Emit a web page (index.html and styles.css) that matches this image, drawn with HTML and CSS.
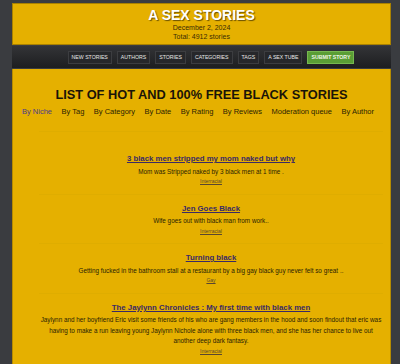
FILE: index.html
```html
<!DOCTYPE html>
<html>
<head>
<meta charset="utf-8">
<link rel="stylesheet" href="styles.css">
</head>
<body>
<div class="wrap">
  <header class="header">
    <div class="site-title">A SEX STORIES</div>
    <div class="meta">December 2, 2024</div>
    <div class="meta">Total: 4912 stories</div>
  </header>
  <nav class="nav">
    <a class="btn">NEW STORIES</a>
    <a class="btn">AUTHORS</a>
    <a class="btn">STORIES</a>
    <a class="btn">CATEGORIES</a>
    <a class="btn">TAGS</a>
    <a class="btn">A SEX TUBE</a>
    <a class="btn submit">SUBMIT STORY</a>
  </nav>
  <main class="main">
    <h1 class="list-title">LIST OF HOT AND 100% FREE BLACK STORIES</h1>
    <div class="tabs">
      <a class="tab active">By Niche</a>
      <a class="tab">By Tag</a>
      <a class="tab">By Category</a>
      <a class="tab">By Date</a>
      <a class="tab">By Rating</a>
      <a class="tab">By Reviews</a>
      <a class="tab">Moderation queue</a>
      <a class="tab">By Author</a>
    </div>
    <div class="stories">
      <div class="story">
        <a class="story-title">3 black men stripped my mom naked but why</a>
        <div class="desc">Mom was Stripped naked by 3 black men at 1 time .</div>
        <a class="cat">Interracial</a>
      </div>
      <div class="story">
        <a class="story-title">Jen Goes Black</a>
        <div class="desc">Wife goes out with black man from work..</div>
        <a class="cat">Interracial</a>
      </div>
      <div class="story">
        <a class="story-title">Turning black</a>
        <div class="desc">Getting fucked in the bathroom stall at a restaurant by a big gay black guy never felt so great ..</div>
        <a class="cat">Gay</a>
      </div>
      <div class="story">
        <a class="story-title">The Jaylynn Chronicles : My first time with black men</a>
        <div class="desc">Jaylynn and her boyfriend Eric visit some friends of his who are gang members in the hood and soon findout that eric was having to make a run leaving young Jaylynn Nichole alone with three black men, and she has her chance to live out another deep dark fantasy.</div>
        <a class="cat">Interracial</a>
      </div>
    </div>
  </main>
</div>
</body>
</html>
```
FILE: styles.css
```css
html, body {
  margin: 0;
  padding: 0;
}
body {
  background: #3a3c40;
  font-family: "Liberation Sans", Arial, sans-serif;
  color: #2a1e05;
}
.wrap {
  margin: 3px 9px 0 12px;
}
.header {
  background: #e5b000;
  border: 1px solid #a98100;
  text-align: center;
  height: 42px;
  box-sizing: border-box;
  padding-top: 3px;
}
.site-title {
  color: #fff;
  font-weight: bold;
  font-size: 14px;
  line-height: 16px;
  text-shadow: 1px 1px 1px #6a5000;
}
.meta {
  font-size: 7px;
  line-height: 9px;
  color: #3a2c05;
}
.nav {
  margin-top: 1px;
  height: 22px;
  background: linear-gradient(#333437, #1d1e20);
  display: flex;
  justify-content: center;
  align-items: center;
  gap: 5px;
  padding-left: 19px;
}
.btn {
  font-size: 5.2px;
  color: #e8e8e8;
  background: #26272a;
  border: 1px solid #3c3d40;
  padding: 3px 3px;
  line-height: 5px;
}
.btn.submit {
  background: #5a9e35;
  border-color: #77b850;
  color: #f0f6e8;
  font-weight: bold;
}
.main {
  margin-top: 1px;
  background: #e5b000;
  min-height: 300px;
  padding-top: 17px;
  border-left: 1px solid #b58b00;
  border-right: 1px solid #b58b00;
}
.list-title {
  margin: 0;
  text-align: center;
  font-size: 12.8px;
  line-height: 18px;
  color: #1a1408;
}
.tabs {
  display: flex;
  justify-content: center;
  gap: 9.5px;
  margin-top: 3px;
  padding-bottom: 14px;
  padding-right: 7px;
  font-size: 7.5px;
  line-height: 10px;
}
.tab {
  color: #2a1e05;
}
.tab.active {
  color: #4c3a8a;
}
.stories {
  margin: 0 7px 0 26px;
  border-top: 1px solid #dfad00;
  padding-top: 13px;
}
.story {
  text-align: center;
  padding: 8px 0 7px;
  border-bottom: 1px solid #dfad00;
}
.story:last-child {
  border-bottom: none;
}
.story-title {
  display: block;
  font-size: 7.8px;
  font-weight: bold;
  color: #3a2a66;
  text-decoration: underline;
  line-height: 12px;
}
.desc {
  font-size: 6.35px;
  line-height: 10.5px;
  margin-top: 1.5px;
}
.cat {
  display: block;
  font-size: 5px;
  line-height: 9.5px;
  color: #5a4630;
  text-decoration: underline;
}
```
